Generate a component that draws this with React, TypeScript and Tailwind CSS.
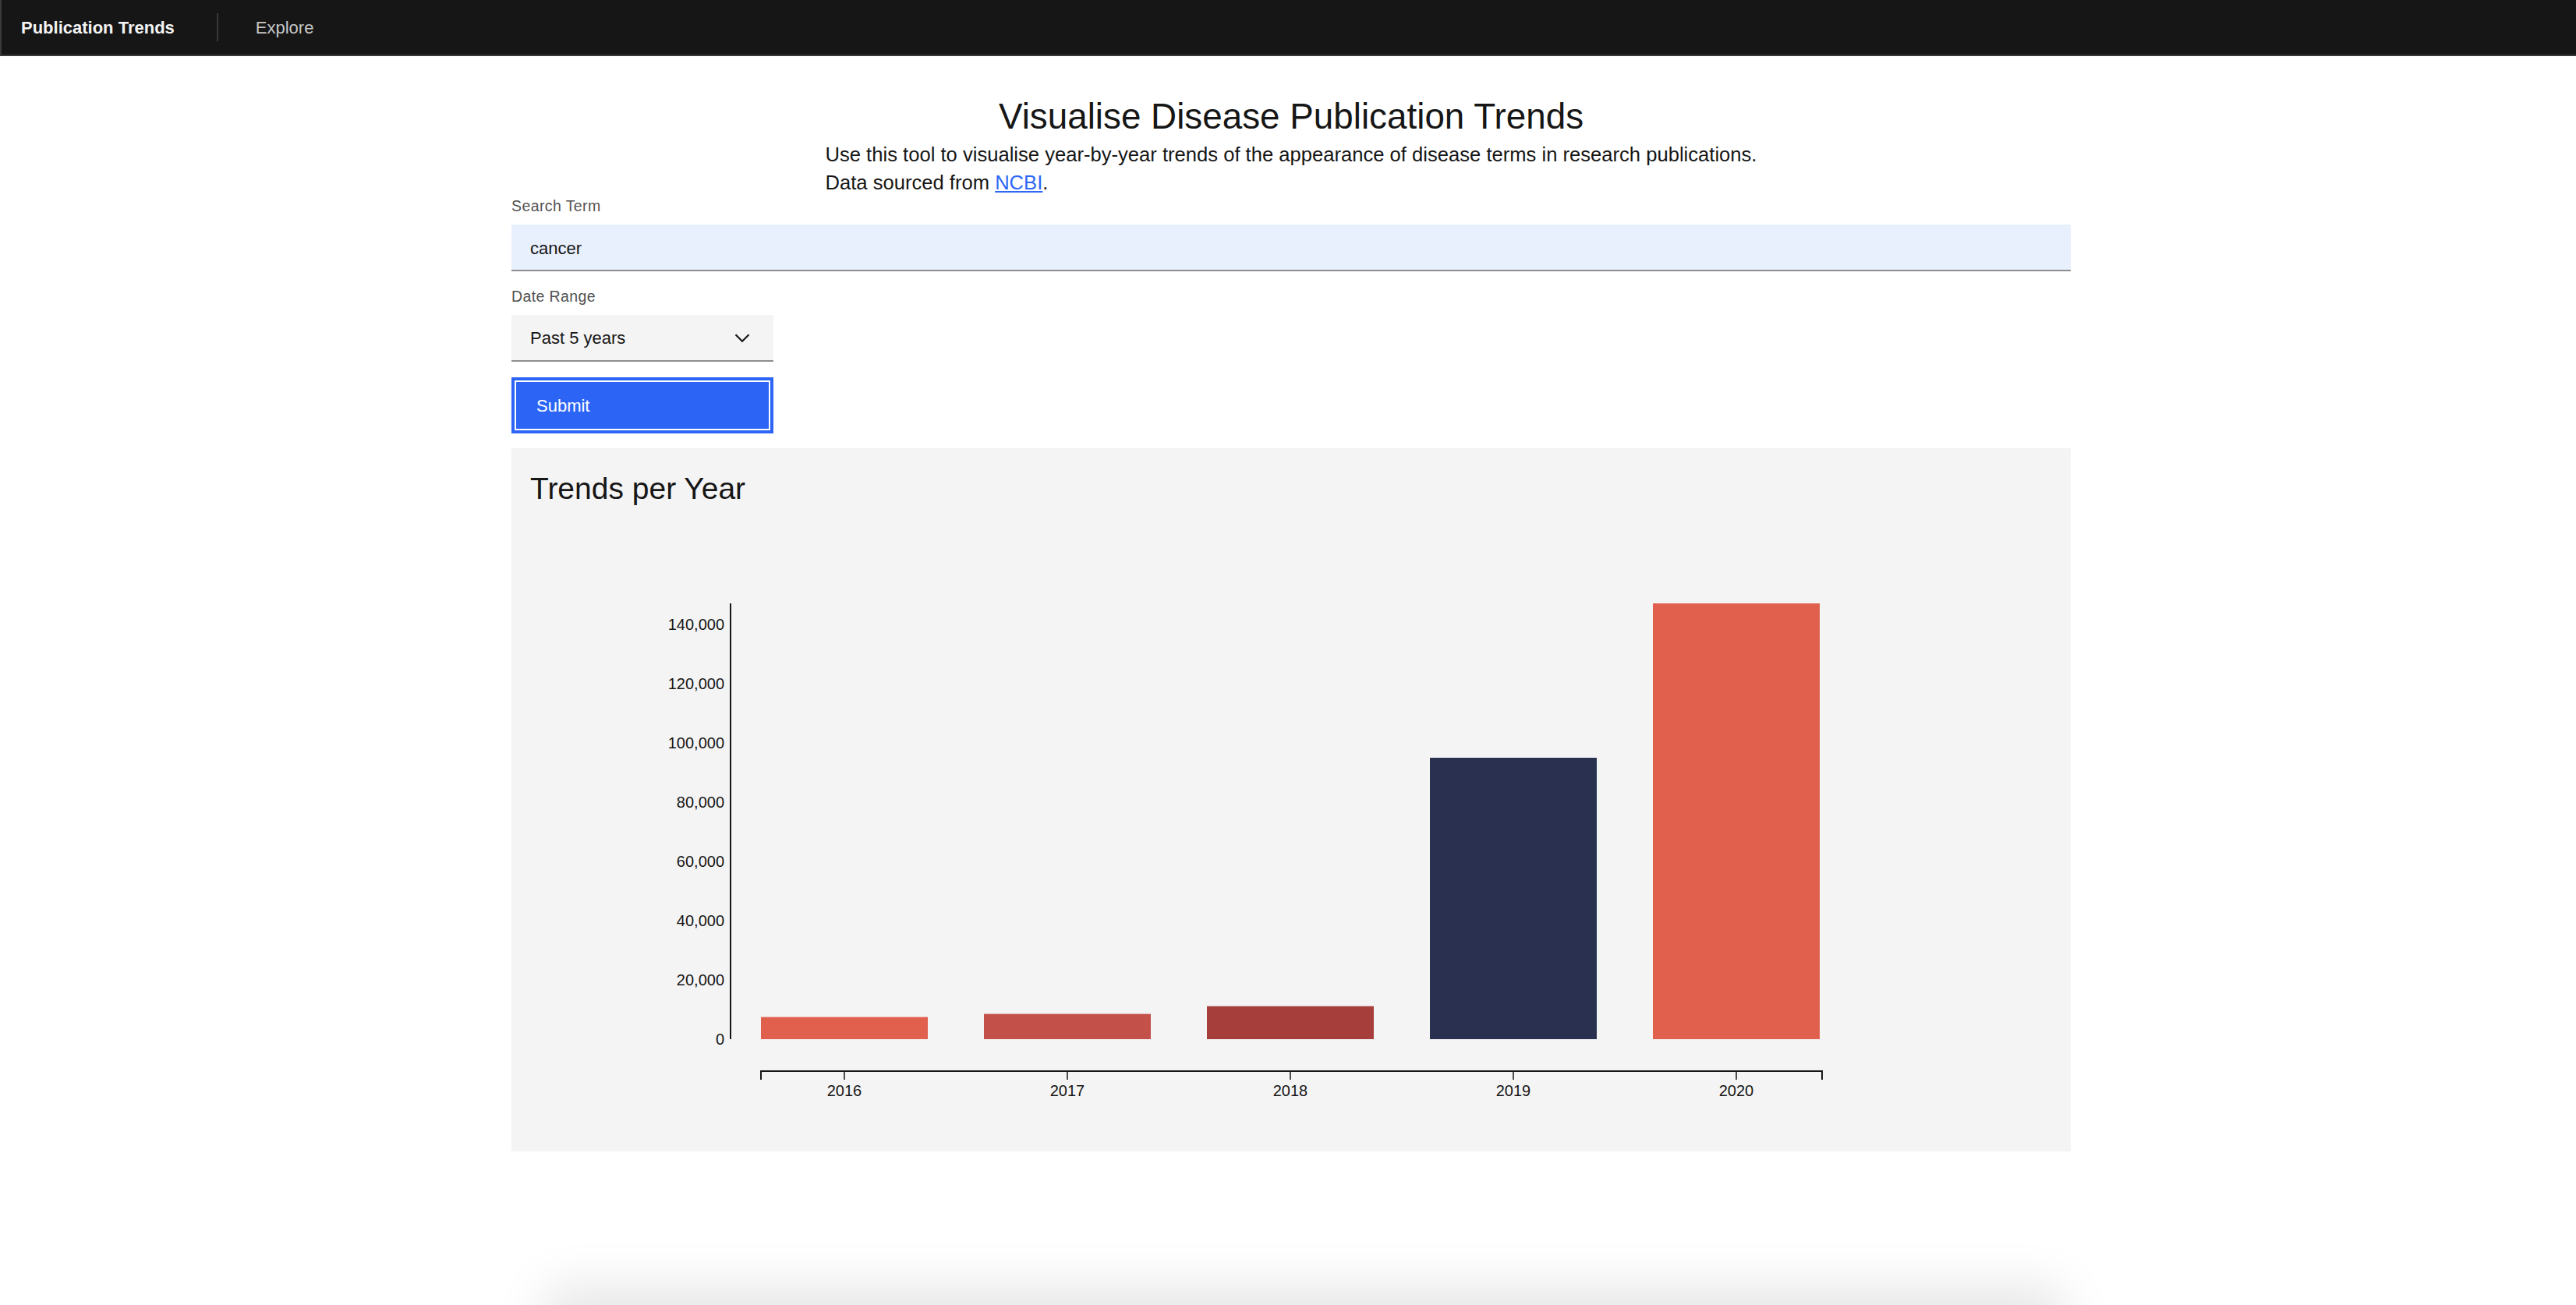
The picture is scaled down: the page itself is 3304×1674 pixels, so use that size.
type Bar = { year: string; value: number; color: string };

const BARS: Bar[] = [
  { year: '2016', value: 7400, color: '#e0604d' },
  { year: '2017', value: 8450, color: '#c4504a' },
  { year: '2018', value: 11050, color: '#a63e3c' },
  { year: '2019', value: 95000, color: '#2a3150' },
  { year: '2020', value: 147105, color: '#e0604d' },
];

const TICKS = [0, 20000, 40000, 60000, 80000, 100000, 120000, 140000];

// chart geometry, in svg px
const Y0 = 682;
const PX_PER_UNIT = 76 / 20000;
const AXIS_X = 281;
const BAR_X0 = 320;
const BAR_STEP = 286;
const BAR_W = 214;
const X_AXIS_Y = 723;

function TrendsChart() {
  const yTop = Y0 - Math.max(...BARS.map((b) => b.value)) * PX_PER_UNIT;
  return (
    <svg width={2000} height={826} className="block" style={{ fontFamily: '"Liberation Sans", Arial, sans-serif' }}>
      {/* y axis */}
      <line x1={AXIS_X} x2={AXIS_X} y1={yTop} y2={Y0} stroke="#161616" strokeWidth={2} />
      {TICKS.map((t) => (
        <text
          key={t}
          x={AXIS_X - 8}
          y={Y0 - t * PX_PER_UNIT}
          textAnchor="end"
          dominantBaseline="central"
          fontSize={20}
          fill="#161616"
        >
          {t.toLocaleString('en-US')}
        </text>
      ))}

      {/* bars */}
      {BARS.map((b, i) => {
        const h = b.value * PX_PER_UNIT;
        const x = BAR_X0 + i * BAR_STEP;
        return (
          <g key={b.year}>
            <rect x={x} y={Y0 - h} width={BAR_W} height={h} fill={b.color} />
            {i < 3 && <rect x={x} y={Y0 - h - 1} width={BAR_W} height={1} fill={b.color} fillOpacity={0.3} />}
          </g>
        );
      })}

      {/* x axis */}
      <path
        d={`M${BAR_X0},${X_AXIS_Y + 11}V${X_AXIS_Y}H1681V${X_AXIS_Y + 11}`}
        fill="none"
        stroke="#161616"
        strokeWidth={2}
      />
      {BARS.map((b, i) => {
        const cx = BAR_X0 + BAR_W / 2 + i * BAR_STEP;
        return (
          <g key={b.year}>
            <line x1={cx} x2={cx} y1={X_AXIS_Y} y2={X_AXIS_Y + 11} stroke="#161616" strokeWidth={1.5} />
            <text x={cx} y={748} textAnchor="middle" dominantBaseline="central" fontSize={20} fill="#161616">
              {b.year}
            </text>
          </g>
        );
      })}
    </svg>
  );
}

export default function App() {
  return (
    <div
      className="h-screen overflow-hidden bg-white text-[#161616]"
      style={{ fontFamily: '"Liberation Sans", Arial, sans-serif' }}
    >
      {/* Header */}
      <header className="h-[72px] bg-[#161616] border-b-2 border-b-[#393939] border-l-2 border-l-[#3a3a3a] flex items-center">
        <a className="pl-[25px] mr-[54px] text-[22px] font-bold text-[#f4f4f4] whitespace-nowrap">Publication Trends</a>
        <div className="w-[2px] h-[36px] bg-[#393939]" />
        <a className="ml-[48px] text-[22px] text-[#c6c6c6]">Explore</a>
      </header>

      <main className="ml-[656px] w-[2000px] flex flex-col">
        <h1 className="mt-[51px] text-center text-[45.8px] leading-[54px]">Visualise Disease Publication Trends</h1>
        <div className="mt-[3px] w-fit mx-auto text-[25.6px] leading-[36px]">
          <p>Use this tool to visualise year-by-year trends of the appearance of disease terms in research publications.</p>
          <p>
            Data sourced from <a className="text-[#2d68f6] underline underline-offset-2">NCBI</a>.
          </p>
        </div>

        {/* Search form */}
        <label className="text-[19.5px] leading-[24px] tracking-[0.4px] text-[#525252]">Search Term</label>
        <input
          className="mt-[12px] h-[60px] w-full bg-[#e8f0fe] border-b-2 border-b-[#8d8d8d] px-[24px] pt-[3px] text-[22px] text-[#161616] outline-none"
          defaultValue="cancer"
        />

        <label className="mt-[20px] text-[19.5px] leading-[24px] tracking-[0.4px] text-[#525252]">Date Range</label>
        <div className="mt-[12px] h-[60px] w-[336px] bg-[#f4f4f4] border-b-2 border-b-[#8d8d8d] pl-[24px] pr-[30px] flex items-center justify-between text-[22px]">
          <span>Past 5 years</span>
          <svg width="20" height="13" viewBox="0 0 20 13" fill="none">
            <path d="M1.5 2.2 10 10.7 18.5 2.2" stroke="#161616" strokeWidth="2.2" />
          </svg>
        </div>

        <button className="mt-[20px] h-[72px] w-[336px] bg-[#2c65f6] border-[4px] border-[#2c65f6] shadow-[inset_0_0_0_2px_#ffffff] text-left pl-[28px] text-[22px] text-white">
          Submit
        </button>

        {/* Results */}
        <section className="mt-[19px] h-[902px] bg-[#f4f4f4] flex flex-col">
          <h2 className="pt-[28px] px-[24px] text-[39px] leading-[48px]">Trends per Year</h2>
          <TrendsChart />
        </section>

        {/* card below the fold, only its shadow shows */}
        <div className="mt-[204px] ml-[44px] w-[1945px] h-[200px] bg-white shadow-[0_-30px_60px_rgba(0,0,0,0.1)]" />
      </main>
    </div>
  );
}
